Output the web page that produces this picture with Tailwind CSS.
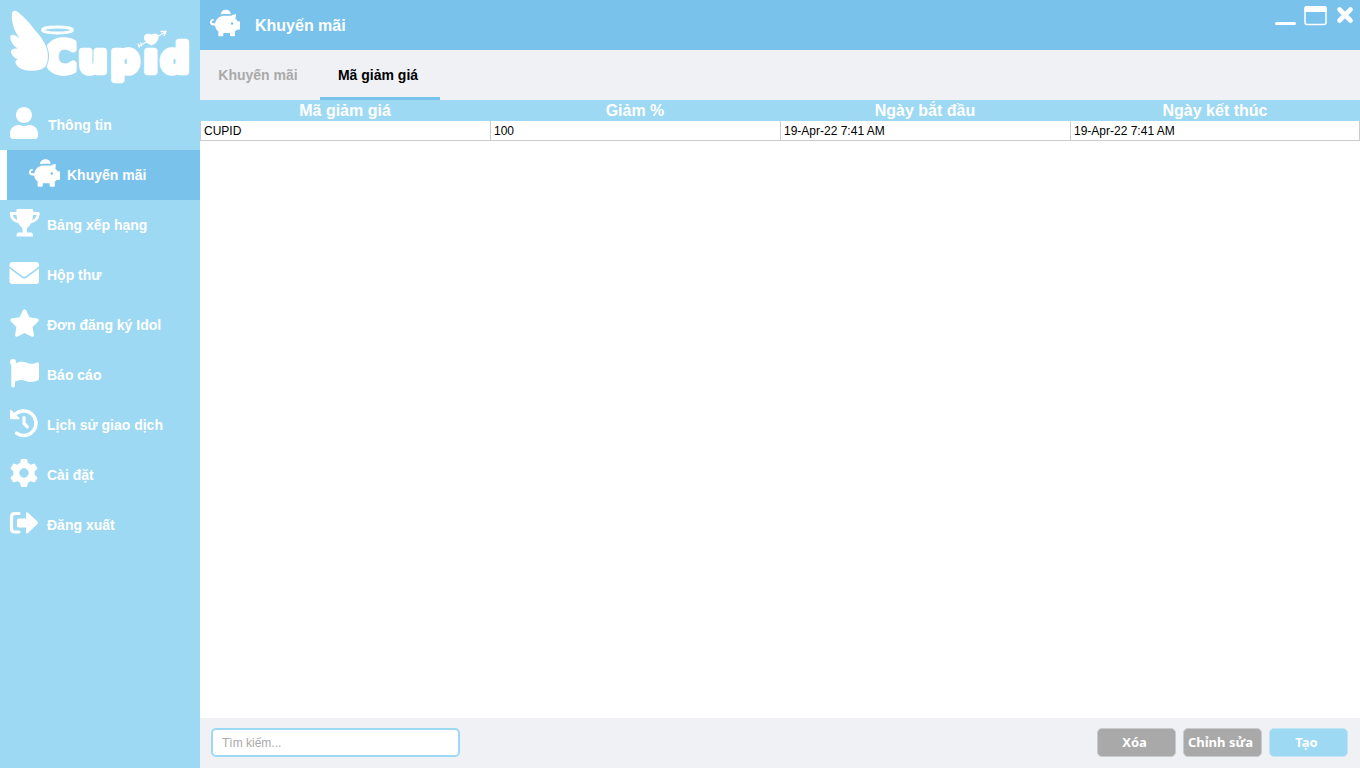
<!DOCTYPE html>
<html lang="vi">
<head>
<meta charset="utf-8">
<meta name="viewport" content="width=device-width, initial-scale=1">
<title>Cupid</title>
<script src="https://cdn.jsdelivr.net/npm/@tailwindcss/browser@4"></script>
</head>
<body class="flex min-h-screen bg-white font-['Liberation_Sans',Arial,sans-serif]">

<svg class="hidden" aria-hidden="true">
  <symbol id="piggy" viewBox="0 0 576 512"><path d="M400 88C370 80 270 80 205 92C205 40 248 0 304 0s96 38 96 88zm-16 28c3.500 0 7 .1 10.400 .3c4.200 .3 8.400 .7 12.600 1.300C424.600 104 450.800 92 500 90l-10 85c15.800 14.800 32 28.800 40.500 48.900l29.500 0c8.800 0 16 7.200 16 16l0 128c0 8.800-7.200 16-16 16l-48 0c-9.100 12.100-19.900 22.900-32 32l0 80c0 8.800-7.200 16-16 16l-64 0c-8.800 0-16-7.200-16-16l0-48-128 0 0 48c0 8.800-7.200 16-16 16l-64 0c-8.800 0-16-7.200-16-16l0-80c-34.900-26.200-58.700-66.300-63.200-112L60 304c-37.600 0-60-30.400-60-62c0-34 26-62 60-62c9 0 16 6 16 14s-6 16-14 16c-18 0-28 14-28 28c0 13 9 22 22 22l41.200 0c12.100-59.800 57.700-112 116.300-132c12.900-4 28.500-12 42.500-12l128 0zm64 148a24 24 0 1 0 -48 0 24 24 0 1 0 48 0z"/></symbol>
</svg>

<aside class="flex w-[200px] shrink-0 flex-col bg-[#9ed9f3] text-white">
  <svg class="h-[100px] w-full" viewBox="0 0 200 100" role="img" aria-label="Cupid" fill="#fff">
    <text y="71.500" x="45 79 111 144 161" font-family="'DejaVu Sans', sans-serif" font-weight="700" font-size="39" stroke="#fff" stroke-width="6.500" stroke-linejoin="round"><tspan font-size="42">C</tspan>upıd</text>
    <path d="M12 14C12 10 16 10 19 13C25 18 30 23 34 29C42 38 48 46 48 56C48 60 47 64 45 67C40 71 34 71 28 70.500C21 70 16 66 15.500 62.500C15 60 17 59.500 19 59.500C15 59 11.500 55 11 52C11 49 14 48.500 18 48.500C13 46 9.500 40 10.500 36C12 33 16 36 19.500 38C14 31 11 21 12 14Z" stroke="#9ed9f3" stroke-width="2" paint-order="stroke"/>
    <ellipse cx="57.500" cy="30" rx="15" ry="3" fill="none" stroke="#fff" stroke-width="2.800"/>
    <path d="M151.500 45.500C146 43.500 142.500 38.500 144.500 35.500C146 33 149.500 33.500 151.500 34.500C153.500 33 157 33 158.500 36C159 40 156 44 151.500 45.500Z"/>
    <path d="M138 46.500L165 32.500M160.500 31.500L166 31.500L164 36M138 43.500L139.500 47.500M140.500 42.500L142 46.500" fill="none" stroke="#fff" stroke-width="1.300"/>
  </svg>
  <nav class="flex flex-col text-sm font-bold" aria-label="Menu">
    <a href="#" class="flex h-[50px] items-center gap-2.5 pl-2.5">
      <svg class="mb-1 h-8 w-7 shrink-0" viewBox="0 0 448 512" fill="currentColor" aria-hidden="true"><path d="M224 256c70.700 0 128-57.300 128-128S294.700 0 224 0 96 57.300 96 128s57.300 128 128 128zm89.600 32h-16.700c-22.200 10.200-46.900 16-72.900 16s-50.600-5.800-72.900-16h-16.700C60.200 288 0 348.200 0 422.400V464c0 26.500 21.500 48 48 48h352c26.500 0 48-21.500 48-48v-41.600c0-74.200-60.200-134.400-134.400-134.400z"/></svg>
      <span>Thông tin</span>
    </a>
    <a href="#" aria-current="page" class="flex h-[50px] items-center gap-[7px] border-l-[7px] border-white bg-[#79c2ec] pl-[22px]">
      <svg class="mb-1 h-7 w-[31px] shrink-0" fill="currentColor" aria-hidden="true"><use href="#piggy"/></svg>
      <span>Khuyến mãi</span>
    </a>
    <a href="#" class="flex h-[50px] items-center gap-[7px] pl-[9px]">
      <svg class="mb-1 h-7 w-[31px] shrink-0" viewBox="0 0 31 28" fill="currentColor" aria-hidden="true"><path d="M8.500 0H23Q24.300 0 24.300 2C24.300 11 22 16 18.500 18.500Q17.500 21 18 23.500H22Q24 23.500 24 27.500H7.500Q7.500 23.500 9.500 23.500H13.500Q14 21 13 18.500C9.500 16 7.300 11 7.300 2Q7.300 0 8.500 0Z"/><path d="M8 4.500H2.200C2.200 9 5 12 10.500 13.200M23.500 4.500H29.300C29.300 9 26.500 12 21 13.200" fill="none" stroke="currentColor" stroke-width="2.800" stroke-linejoin="round"/></svg>
      <span>Bảng xếp hạng</span>
    </a>
    <a href="#" class="flex h-[50px] items-center gap-[7px] pl-[9px]">
      <svg class="mb-1 h-[22px] w-[31px] shrink-0" viewBox="0 0 31 22" fill="currentColor" aria-hidden="true"><path d="M4 0H27Q30 0 30 3V4.500L17.500 13.800Q15.200 15.500 13 13.800L.5 4.500V3Q.5 0 4 0ZM.5 6.600L12.500 15.600Q15.200 17.800 18 15.600L30 6.600V19Q30 22 27 22H3.500Q.5 22 .5 19Z"/></svg>
      <span>Hộp thư</span>
    </a>
    <a href="#" class="flex h-[50px] items-center gap-[7px] pl-[9px]">
      <svg class="mb-1 h-7 w-[31px] shrink-0" viewBox="0 0 576 512" fill="currentColor" aria-hidden="true"><path d="M316.900 18C311.600 7 300.400 0 288.100 0s-23.400 7-28.800 18L195 150.300 51.400 171.500c-12 1.800-22 10.200-25.700 21.700s-.7 24.200 7.900 32.700L137.800 329 113.200 474.700c-2 12 3 24.200 12.900 31.300s23 8 33.800 2.300l128.300-68.500 128.300 68.500c10.800 5.700 23.900 4.900 33.800-2.300s14.900-19.300 12.900-31.300L438.500 329 542.700 225.900c8.600-8.500 11.700-21.200 7.900-32.700s-13.700-19.900-25.700-21.700L381.200 150.300 316.900 18z"/></svg>
      <span>Đơn đăng ký Idol</span>
    </a>
    <a href="#" class="flex h-[50px] items-center gap-[7px] pl-[9px]">
      <svg class="mb-1 h-[30px] w-[31px] shrink-0" viewBox="0 0 31 30" fill="currentColor" aria-hidden="true"><circle cx="4" cy="4" r="3"/><path d="M2.300 4H6V27.500Q6 29.500 4.200 29.500Q2.300 29.500 2.300 27.500Z"/><path d="M6 5.500C14 2 17 5 21 5.800C24 6 26 5 28 4.400Q30 4 30 6V20.500Q30 22 28.500 22.500C20 26 17 22 12 22Q9 22 6 23.500Z"/></svg>
      <span>Báo cáo</span>
    </a>
    <a href="#" class="flex h-[50px] items-center gap-[7px] pl-[9px]">
      <svg class="mb-1 h-[30px] w-[31px] shrink-0" viewBox="0 0 31 30" fill="none" stroke="currentColor" stroke-linecap="round" aria-hidden="true"><path d="M5.500 7A12.300 12.300 0 1 1 7.500 25.200" stroke-width="3.500"/><path d="M15 9.500V15.500L18.300 18.800" stroke-width="3.200" stroke-linejoin="round"/><path d="M1.800 2.500V10.500H9.800Z" fill="currentColor" stroke-width="1.500" stroke-linejoin="round"/></svg>
      <span>Lịch sử giao dịch</span>
    </a>
    <a href="#" class="flex h-[50px] items-center gap-[7px] pl-[9px]">
      <svg class="mb-1 h-[30px] w-[31px] shrink-0" viewBox="0 0 31 30" fill="none" stroke="currentColor" aria-hidden="true"><circle cx="15" cy="15" r="7.700" stroke-width="6"/><path id="tooth" d="M12.500 5L13 2.200H17L17.500 5Z" fill="currentColor" stroke-width="2.500" stroke-linejoin="round"/><use href="#tooth" transform="rotate(60 15 15)"/><use href="#tooth" transform="rotate(120 15 15)"/><use href="#tooth" transform="rotate(180 15 15)"/><use href="#tooth" transform="rotate(240 15 15)"/><use href="#tooth" transform="rotate(300 15 15)"/></svg>
      <span>Cài đặt</span>
    </a>
    <a href="#" class="flex h-[50px] items-center gap-[7px] pl-[9px]">
      <svg class="mb-1 h-6 w-[31px] shrink-0" viewBox="0 0 31 24" fill="currentColor" aria-hidden="true"><path d="M10 2.500H6Q2.500 2.500 2.500 6V17.500Q2.500 21 6 21H10" fill="none" stroke="currentColor" stroke-width="3.200" stroke-linecap="round"/><path d="M9.500 7.500H17V2.500Q17 .5 19 1.800L28.500 10.500Q29.500 11.700 28.500 13L19 22Q17 23.500 17 21V16.500H9.500Q8 16.500 8 15V9Q8 7.500 9.500 7.500Z"/></svg>
      <span>Đăng xuất</span>
    </a>
  </nav>
</aside>

<main class="flex min-w-0 flex-1 flex-col">
  <header class="flex h-[50px] items-center bg-[#79c2ec] pl-2.5 text-white">
    <svg class="mb-1 h-7 w-[30px]" fill="currentColor" aria-hidden="true"><use href="#piggy"/></svg>
    <h1 class="ml-[15px] flex-1 pt-0.5 text-base font-bold">Khuyến mãi</h1>
    <div class="mr-1 flex h-full items-start gap-1 pt-1">
      <button type="button" aria-label="Thu nhỏ" class="p-0.5"><svg class="h-5 w-[22px]" viewBox="0 0 22 20" aria-hidden="true"><rect x="1" y="16" width="21" height="3" rx="1.500" fill="#fff"/></svg></button>
      <button type="button" aria-label="Phóng to" class="p-0.5"><svg class="h-5 w-6" viewBox="0 0 24 20" aria-hidden="true"><rect x="1" y="0.500" width="21" height="18" rx="2" fill="none" stroke="#fff" stroke-width="1.500"/><path d="M.5 2Q.5 0 2.500 0H20.500Q22.500 0 22.500 2V6H.5Z" fill="#fff"/></svg></button>
      <button type="button" aria-label="Đóng" class="p-0.5"><svg class="h-5 w-[18px]" viewBox="0 0 18 20" aria-hidden="true"><path d="M3.500 3.500L14.500 14.500M14.500 3.500L3.500 14.500" stroke="#fff" stroke-width="4.600" stroke-linecap="round"/></svg></button>
    </div>
  </header>

  <div class="flex h-[50px] bg-[#f0f1f5] text-sm font-bold" role="tablist">
    <button type="button" role="tab" aria-selected="false" class="w-[120px] border-b-3 border-transparent pr-1 pt-[3px] text-[#a9a9a9]">Khuyến mãi</button>
    <button type="button" role="tab" aria-selected="true" class="w-[120px] border-b-3 border-[#79c2ec] pr-1 pt-[3px] text-black">Mã giảm giá</button>
  </div>

  <div class="flex-1 bg-white">
    <table class="w-full table-fixed border-separate border-spacing-0">
      <thead class="bg-[#9ed9f3] text-base leading-[21px] text-white">
        <tr>
          <th scope="col" class="p-0">Mã giảm giá</th>
          <th scope="col" class="p-0">Giảm %</th>
          <th scope="col" class="p-0">Ngày bắt đầu</th>
          <th scope="col" class="p-0">Ngày kết thúc</th>
        </tr>
      </thead>
      <tbody class="text-xs leading-[18px] text-black">
        <tr>
          <td class="border-b border-l border-[#cbcbd0] px-[3px] pt-px pb-0">CUPID</td>
          <td class="border-b border-l border-[#cbcbd0] px-[3px] pt-px pb-0">100</td>
          <td class="border-b border-l border-[#cbcbd0] px-[3px] pt-px pb-0">19-Apr-22 7:41 AM</td>
          <td class="border-x border-b border-[#cbcbd0] px-[3px] pt-px pb-0">19-Apr-22 7:41 AM</td>
        </tr>
      </tbody>
    </table>
  </div>

  <footer class="flex h-[50px] items-start gap-[7px] bg-[#f0f1f5] pt-2.5 pr-3 pl-[11px]">
    <input type="search" aria-label="Tìm kiếm" placeholder="Tìm kiếm..." class="mr-auto h-[29px] w-[249px] rounded-[5px] border-2 border-[#9ed9f3] bg-white px-[9px] text-xs text-black outline-none placeholder:text-[#a9a9a9]">
    <button type="button" class="h-[29px] w-[79px] rounded-[5px] border border-[#c9cacd] bg-[#a9a9a9] pr-1 font-['Noto_Sans',sans-serif] text-[13px] font-bold text-white">Xóa</button>
    <button type="button" class="h-[29px] w-[79px] rounded-[5px] border border-[#c9cacd] bg-[#a9a9a9] pr-1 font-['Noto_Sans',sans-serif] text-[13px] font-bold whitespace-nowrap text-white">Chỉnh sửa</button>
    <button type="button" class="h-[29px] w-[79px] rounded-[5px] border border-[#c0e5f5] bg-[#9ed9f3] pr-1 font-['Noto_Sans',sans-serif] text-[13px] font-bold text-white">Tạo</button>
  </footer>
</main>
</body>
</html>
